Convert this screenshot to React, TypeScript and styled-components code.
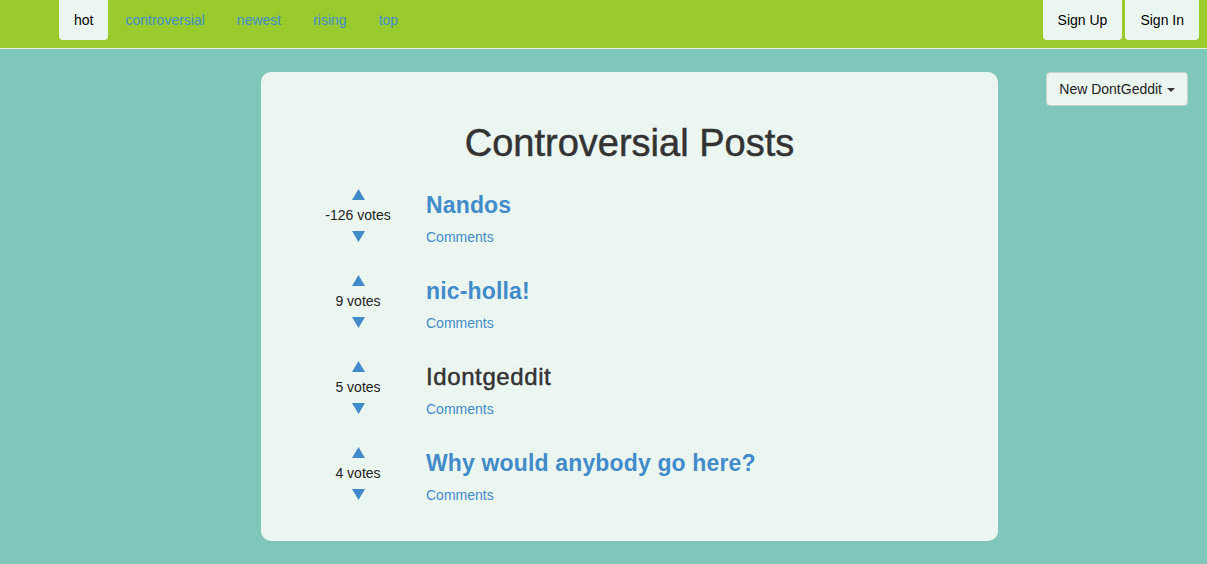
import React from "react";
import styled, { createGlobalStyle } from "styled-components";

const GlobalStyle = createGlobalStyle`
  html, body {
    margin: 0;
    padding: 0;
    background: #80c7bb;
    font-family: "Liberation Sans", Helvetica, Arial, sans-serif;
    font-size: 14px;
    color: #333;
  }
  * { box-sizing: border-box; }
`;

const NavBar = styled.header`
  height: 49px;
  background: #99cb2c;
  border-bottom: 1px solid #e6f2dc;
  display: flex;
  justify-content: space-between;
  align-items: flex-start;
  padding: 0 8px 0 59px;
`;

const Pills = styled.nav`
  display: flex;
  gap: 2px;
`;

const Pill = styled.a<{ $active?: boolean }>`
  display: block;
  height: 40px;
  line-height: 40px;
  padding: 0 15px;
  border-radius: 0 0 4px 4px;
  font-size: 14px;
  text-decoration: none;
  color: ${(p) => (p.$active ? "#000" : "#428bca")};
  background: ${(p) => (p.$active ? "#ecf6f1" : "transparent")};
`;

const AuthGroup = styled.div`
  display: flex;
  gap: 3px;
`;

const AuthButton = styled.a`
  display: block;
  height: 40px;
  line-height: 40px;
  padding: 0 15px;
  border-radius: 0 0 4px 4px;
  background: #ecf6f1;
  color: #000;
  font-size: 14px;
  text-decoration: none;
`;

const Main = styled.main`
  display: grid;
  grid-template-columns: 261px 737px 1fr;
  padding-top: 23px;
`;

const Card = styled.section`
  grid-column: 2;
  background: #ecf6f1;
  border-radius: 10px;
  padding: 49px 49px 26px;
  min-height: 469px;
`;

const Heading = styled.h1`
  margin: 0 0 23px;
  text-align: center;
  font-size: 38px;
  line-height: 44px;
  font-weight: 500;
  color: #333;
  -webkit-text-stroke: 0.5px #333;
`;

const PostList = styled.ul`
  list-style: none;
  margin: 0;
  padding: 0;
  display: flex;
  flex-direction: column;
  gap: 26px;
`;

const PostRow = styled.li`
  display: flex;
  align-items: flex-start;
  gap: 20px;
  height: 60px;
`;

const VoteCol = styled.div`
  width: 96px;
  display: flex;
  flex-direction: column;
  align-items: center;
  gap: 7px;
`;

const VoteCount = styled.span`
  font-size: 14px;
  line-height: 16px;
  color: #222;
`;

const ArrowBtn = styled.button`
  border: 0;
  background: none;
  padding: 0;
  height: 12px;
  display: flex;
  align-items: center;
  cursor: pointer;
`;

const PostBody = styled.div`
  display: flex;
  flex-direction: column;
  padding-top: 2px;
`;

const PostTitle = styled.a<{ $link?: boolean }>`
  font-size: ${(p) => (p.$link ? "23px" : "24px")};
  line-height: 30px;
  font-weight: ${(p) => (p.$link ? 700 : 400)};
  color: ${(p) => (p.$link ? "#428bca" : "#333")};
  text-decoration: none;
  ${(p) => (p.$link ? "letter-spacing: 0.15px;" : "-webkit-text-stroke: 0.5px #333; letter-spacing: 0.6px;")}
`;

const CommentsLink = styled.a`
  margin-top: 8px;
  font-size: 14px;
  line-height: 18px;
  color: #428bca;
  text-decoration: none;
`;

const Side = styled.aside`
  grid-column: 3;
  display: flex;
  justify-content: flex-end;
  align-items: flex-start;
  padding-right: 19px;
`;

const Dropdown = styled.button`
  height: 34px;
  padding: 0 12px;
  display: flex;
  align-items: center;
  gap: 5px;
  font-family: "Liberation Sans", Helvetica, Arial, sans-serif;
  font-size: 14px;
  color: #222;
  background: #ecf6f1;
  border: 1px solid #c8d0cc;
  border-radius: 4px;
`;

const Caret = styled.span`
  width: 0;
  height: 0;
  border-left: 4px solid transparent;
  border-right: 4px solid transparent;
  border-top: 4px solid #333;
  margin-top: 1px;
`;

const Up = () => (
  <svg width="13" height="11" viewBox="0 0 13 11">
    <polygon points="6.5,0 13,11 0,11" fill="#428bca" />
  </svg>
);
const Down = () => (
  <svg width="13" height="11" viewBox="0 0 13 11">
    <polygon points="0,0 13,0 6.5,11" fill="#428bca" />
  </svg>
);

const posts = [
  { title: "Nandos", votes: -126, link: true },
  { title: "nic-holla!", votes: 9, link: true },
  { title: "Idontgeddit", votes: 5, link: false },
  { title: "Why would anybody go here?", votes: 4, link: true },
];

export default function App() {
  return (
    <>
      <GlobalStyle />
      <NavBar>
        <Pills>
          <Pill $active href="#">hot</Pill>
          <Pill href="#">controversial</Pill>
          <Pill href="#">newest</Pill>
          <Pill href="#">rising</Pill>
          <Pill href="#">top</Pill>
        </Pills>
        <AuthGroup>
          <AuthButton href="#">Sign Up</AuthButton>
          <AuthButton href="#">Sign In</AuthButton>
        </AuthGroup>
      </NavBar>
      <Main>
        <Card>
          <Heading>Controversial Posts</Heading>
          <PostList>
            {posts.map((p) => (
              <PostRow key={p.title}>
                <VoteCol>
                  <ArrowBtn aria-label="upvote"><Up /></ArrowBtn>
                  <VoteCount>{p.votes} votes</VoteCount>
                  <ArrowBtn aria-label="downvote"><Down /></ArrowBtn>
                </VoteCol>
                <PostBody>
                  <PostTitle $link={p.link} href={p.link ? "#" : undefined}>{p.title}</PostTitle>
                  <CommentsLink href="#">Comments</CommentsLink>
                </PostBody>
              </PostRow>
            ))}
          </PostList>
        </Card>
        <Side>
          <Dropdown>
            New DontGeddit <Caret />
          </Dropdown>
        </Side>
      </Main>
    </>
  );
}
